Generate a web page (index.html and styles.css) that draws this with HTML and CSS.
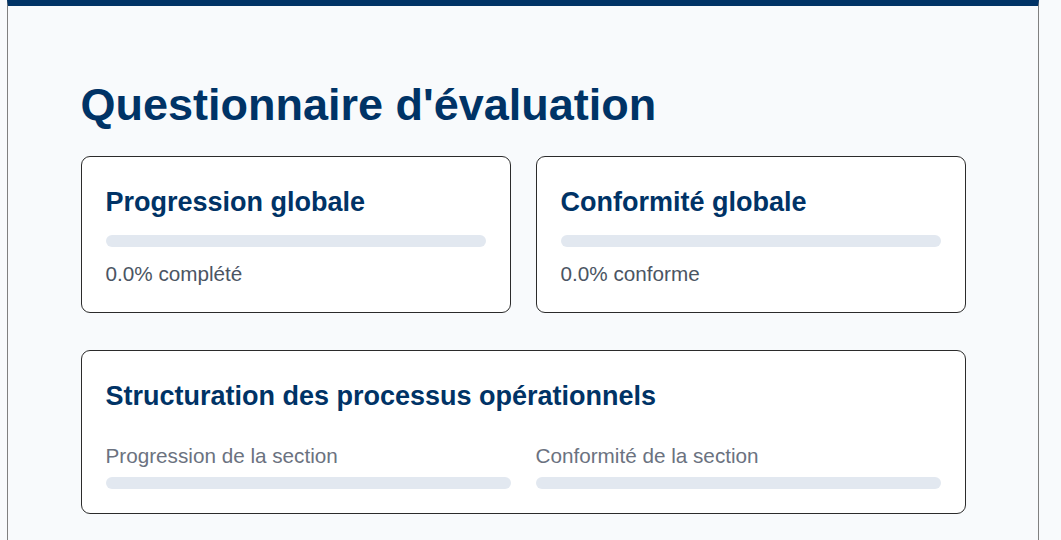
FILE: index.html
```html
<!DOCTYPE html>
<html lang="fr">
<head>
<meta charset="utf-8">
<title>Questionnaire d'évaluation</title>
<link rel="stylesheet" href="styles.css">
</head>
<body>
<div class="frame">
  <main class="content">
    <h1 class="page-title">Questionnaire d'évaluation</h1>
    <div class="summary">
      <section class="card">
        <h2 class="card-title">Progression globale</h2>
        <div class="bar"></div>
        <p class="stat">0.0% complété</p>
      </section>
      <section class="card">
        <h2 class="card-title">Conformité globale</h2>
        <div class="bar"></div>
        <p class="stat">0.0% conforme</p>
      </section>
    </div>
    <section class="card section-card">
      <h2 class="card-title">Structuration des processus opérationnels</h2>
      <div class="section-stats">
        <div class="section-stat">
          <div class="label">Progression de la section</div>
          <div class="bar"></div>
        </div>
        <div class="section-stat">
          <div class="label">Conformité de la section</div>
          <div class="bar"></div>
        </div>
      </div>
    </section>
  </main>
</div>
</body>
</html>
```
FILE: styles.css
```css
* { box-sizing: border-box; }
html, body { margin: 0; padding: 0; }
body {
  background: #f8fafc;
  font-family: "Liberation Sans", Arial, sans-serif;
  color: #1f2937;
}
.frame {
  margin-left: 7px;
  width: 1032px;
  min-height: 540px;
  background: #f8fafc;
  border-left: 1px solid #808080;
  border-right: 1px solid #808080;
  border-top: 6px solid #003366;
}
.content {
  max-width: 885px;
  margin: 0 auto;
  padding-top: 73px;
}
.page-title {
  margin: 0 0 25px;
  font-size: 45px;
  line-height: 52px;
  font-weight: 700;
  color: #003366;
}
.summary {
  display: grid;
  grid-template-columns: 1fr 1fr;
  gap: 25px;
  margin-bottom: 37px;
}
.card {
  background: #ffffff;
  border: 1px solid #2b2b2b;
  border-radius: 9px;
  padding: 28px 24px 27px;
}
.card-title {
  margin: 0;
  font-size: 27px;
  line-height: 35px;
  font-weight: 700;
  color: #003366;
}
.bar {
  height: 12px;
  border-radius: 6px;
  background: #e2e8f0;
}
.card > .bar { margin-top: 15px; }
.stat {
  margin: 15px 0 0;
  font-size: 20.7px;
  line-height: 23px;
  color: #4b5563;
}
.section-card { padding-bottom: 24px; }
.section-stats {
  display: grid;
  grid-template-columns: 1fr 1fr;
  gap: 25px;
  margin-top: 30px;
}
.label {
  font-size: 20.7px;
  line-height: 23px;
  color: #6b7280;
  margin-bottom: 10px;
}
```
